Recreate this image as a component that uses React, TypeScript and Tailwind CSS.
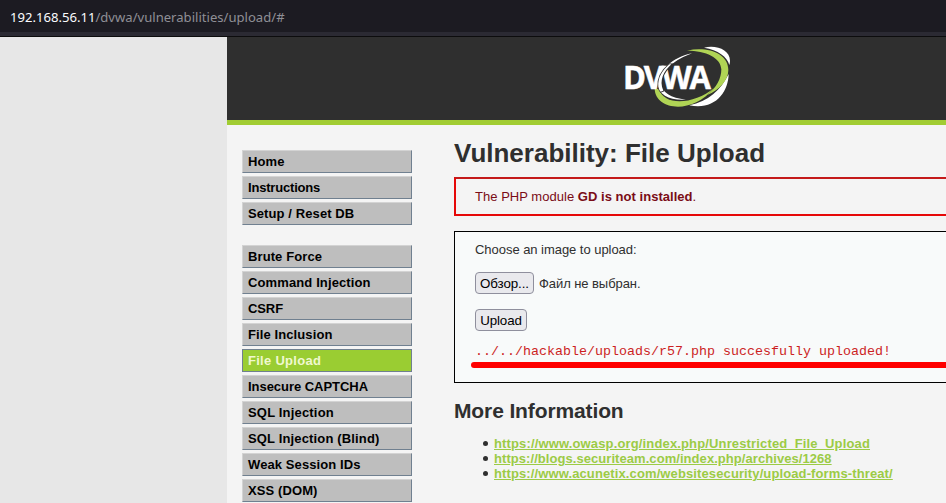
import React from "react";

const sans = "font-['Liberation_Sans',Arial,sans-serif]";

type Item = { label: string; active?: boolean; tracking?: string };

const groups: Item[][] = [
  [
    { label: "Home" },
    { label: "Instructions", tracking: "tracking-[-0.19px]" },
    { label: "Setup / Reset DB" },
  ],
  [
    { label: "Brute Force" },
    { label: "Command Injection", tracking: "tracking-[0.12px]" },
    { label: "CSRF", tracking: "tracking-[-0.1px]" },
    { label: "File Inclusion" },
    { label: "File Upload", active: true, tracking: "tracking-[0.28px]" },
    { label: "Insecure CAPTCHA", tracking: "tracking-[-0.04px]" },
    { label: "SQL Injection", tracking: "tracking-[0.18px]" },
    { label: "SQL Injection (Blind)", tracking: "tracking-[0.15px]" },
    { label: "Weak Session IDs" },
    { label: "XSS (DOM)" },
  ],
];

const links = [
  { url: "https://www.owasp.org/index.php/Unrestricted_File_Upload", tracking: "tracking-[0.145px]" },
  { url: "https://blogs.securiteam.com/index.php/archives/1268", tracking: "tracking-[0.06px]" },
  { url: "https://www.acunetix.com/websitesecurity/upload-forms-threat/", tracking: "tracking-[0.115px]" },
];

function Logo() {
  return (
    <svg className="h-[67px] w-[115px]" viewBox="60 39 345 201" aria-label="DVWA">
      <path fill="#fff" d="M312 53 C350 44 390 60 390 92 Q390 98 388 105 C382 80 354 60 312 53Z" />
      <path fill="#fff" d="M386 132 C385 188 343 242 268 226 C325 214 362 181 386 132Z" />
      <path fill="#b0d455" d="M261 62 C322 48 385 70 385 120 C385 152 357 181 322 195 C350 173 364 145 364 118 C363 83 318 62 261 62Z" />
      <path fill="#b0d455" d="M164 177 C167 240 275 256 342 174 C285 222 193 231 177 177Z" />
      <path fill="#fff" d="M276 70 C220 81 172 121 174 164 C176 194 208 212 258 209 C213 203 184 188 184 158 C184 119 228 88 276 70Z" />
      <text
        x="69"
        y="176"
        fontSize="99"
        fontWeight="700"
        fill="#fff"
        stroke="#fff"
        strokeWidth="1.5"
        letterSpacing="-7"
        textLength="257"
        lengthAdjust="spacingAndGlyphs"
        className="font-['Open_Sans',sans-serif]"
      >
        DVWA
      </text>
      <path
        fill="#fff"
        stroke="#2f2f2f"
        strokeWidth="5"
        paintOrder="stroke"
        d="M208 103 C185 122 173 145 175 170 Q177 180 182 185 L190 182 C176 150 192 124 214 103Z"
      />
    </svg>
  );
}

function Menu() {
  return (
    <nav className="flex w-[227px] shrink-0 flex-col gap-5 pt-[25px] pl-[15px]">
      {groups.map((g, i) => (
        <ul key={i} className="flex w-[170px] flex-col gap-[3px]">
          {g.map((it) => (
            <li
              key={it.label}
              className={
                "h-[23px] border pl-[5px] text-[13px] leading-[21px] font-bold whitespace-nowrap " +
                (it.tracking ?? "tracking-[0.1px]") +
                (it.active
                  ? " border-[#708090] bg-[#9acd32] text-[#f0f8d0]"
                  : " border-t-[#d3d3d3] border-r-[#708090] border-b-[#708090] border-l-[#d3d3d3] bg-[#bebebe] text-black")
              }
            >
              {it.label}
            </li>
          ))}
        </ul>
      ))}
    </nav>
  );
}

const button =
  "h-[22px] rounded-[4px] border border-[#8f8f9d] bg-[#e9e9ed] text-center text-[13.33px] leading-[21px] tracking-[-0.1px] text-black whitespace-nowrap";

export default function App() {
  return (
    <div className={"flex h-[503px] w-[946px] flex-col overflow-hidden bg-[#e7e7e7] " + sans}>
      <div className="h-[37px] shrink-0 border-b border-[#0c0c0d] bg-[#2b2a33]">
        <div className="h-8 bg-[#1c1b22] pt-[7px] pl-[10px] font-['Noto_Sans',sans-serif] text-[13.1px] leading-[20px] text-[#8f8f96]">
          <span className="text-[#fbfbfe]">192.168.56.11</span>/dvwa/vulnerabilities/upload/#
        </div>
      </div>
      <div className="ml-[227px] flex min-h-0 flex-1 flex-col bg-[#f4f4f4]">
        <header className="h-[88px] shrink-0 border-b-[5px] border-[#a1cc33] bg-[#2f2f2f] pt-[6px] pl-[393px]">
          <Logo />
        </header>
        <div className="flex min-h-0 flex-1">
          <Menu />
          <main className="w-[560px] shrink-0 pt-[10px] text-[13px] text-[#2f2f2f]">
            <h1 className="h-[42px] text-[26px] leading-[36px] font-bold whitespace-nowrap">
              Vulnerability: File Upload
            </h1>
            <div className="h-[39px] border-2 border-[#e60808] border-t-[#c41a1a] pl-[19px] leading-[35px] tracking-[0.03px] text-[#7a0c16]">
              The PHP module <b>GD is not installed</b>.
            </div>
            <div className="mt-[15px] h-[152px] border border-black bg-[#f8fafa] pt-[9px] pl-5">
              <p className="leading-[18px] tracking-[-0.04px]">Choose an image to upload:</p>
              <div className="mt-[13px] flex items-center gap-[5px]">
                <span className={button + " w-[59px]"}>Обзор...</span>
                <span className="pt-px tracking-[-0.07px]">Файл не выбран.</span>
              </div>
              <div className={button + " mt-[15px] w-[52px]"}>Upload</div>
              <pre className="mt-[12px] font-['Liberation_Mono',monospace] text-[13.33px] leading-[18px] text-[#cc1f1f]">
                ../../hackable/uploads/r57.php succesfully uploaded!
              </pre>
              <div className="-ml-1 mt-[1px] h-[6px] rounded-l-full bg-[#ff0000]" />
            </div>
            <h2 className="mt-[16px] text-[21px] leading-6 font-bold tracking-[-0.12px]">More Information</h2>
            <ul className="mt-[13px] pl-[29px] leading-[15px]">
              {links.map((l) => (
                <li key={l.url} className="flex items-center gap-[6px]">
                  <span className="size-[5px] rounded-full bg-[#2f2f2f]" />
                  <a className={"font-bold text-[#9ccb45] underline " + l.tracking}>{l.url}</a>
                </li>
              ))}
            </ul>
          </main>
        </div>
      </div>
    </div>
  );
}
